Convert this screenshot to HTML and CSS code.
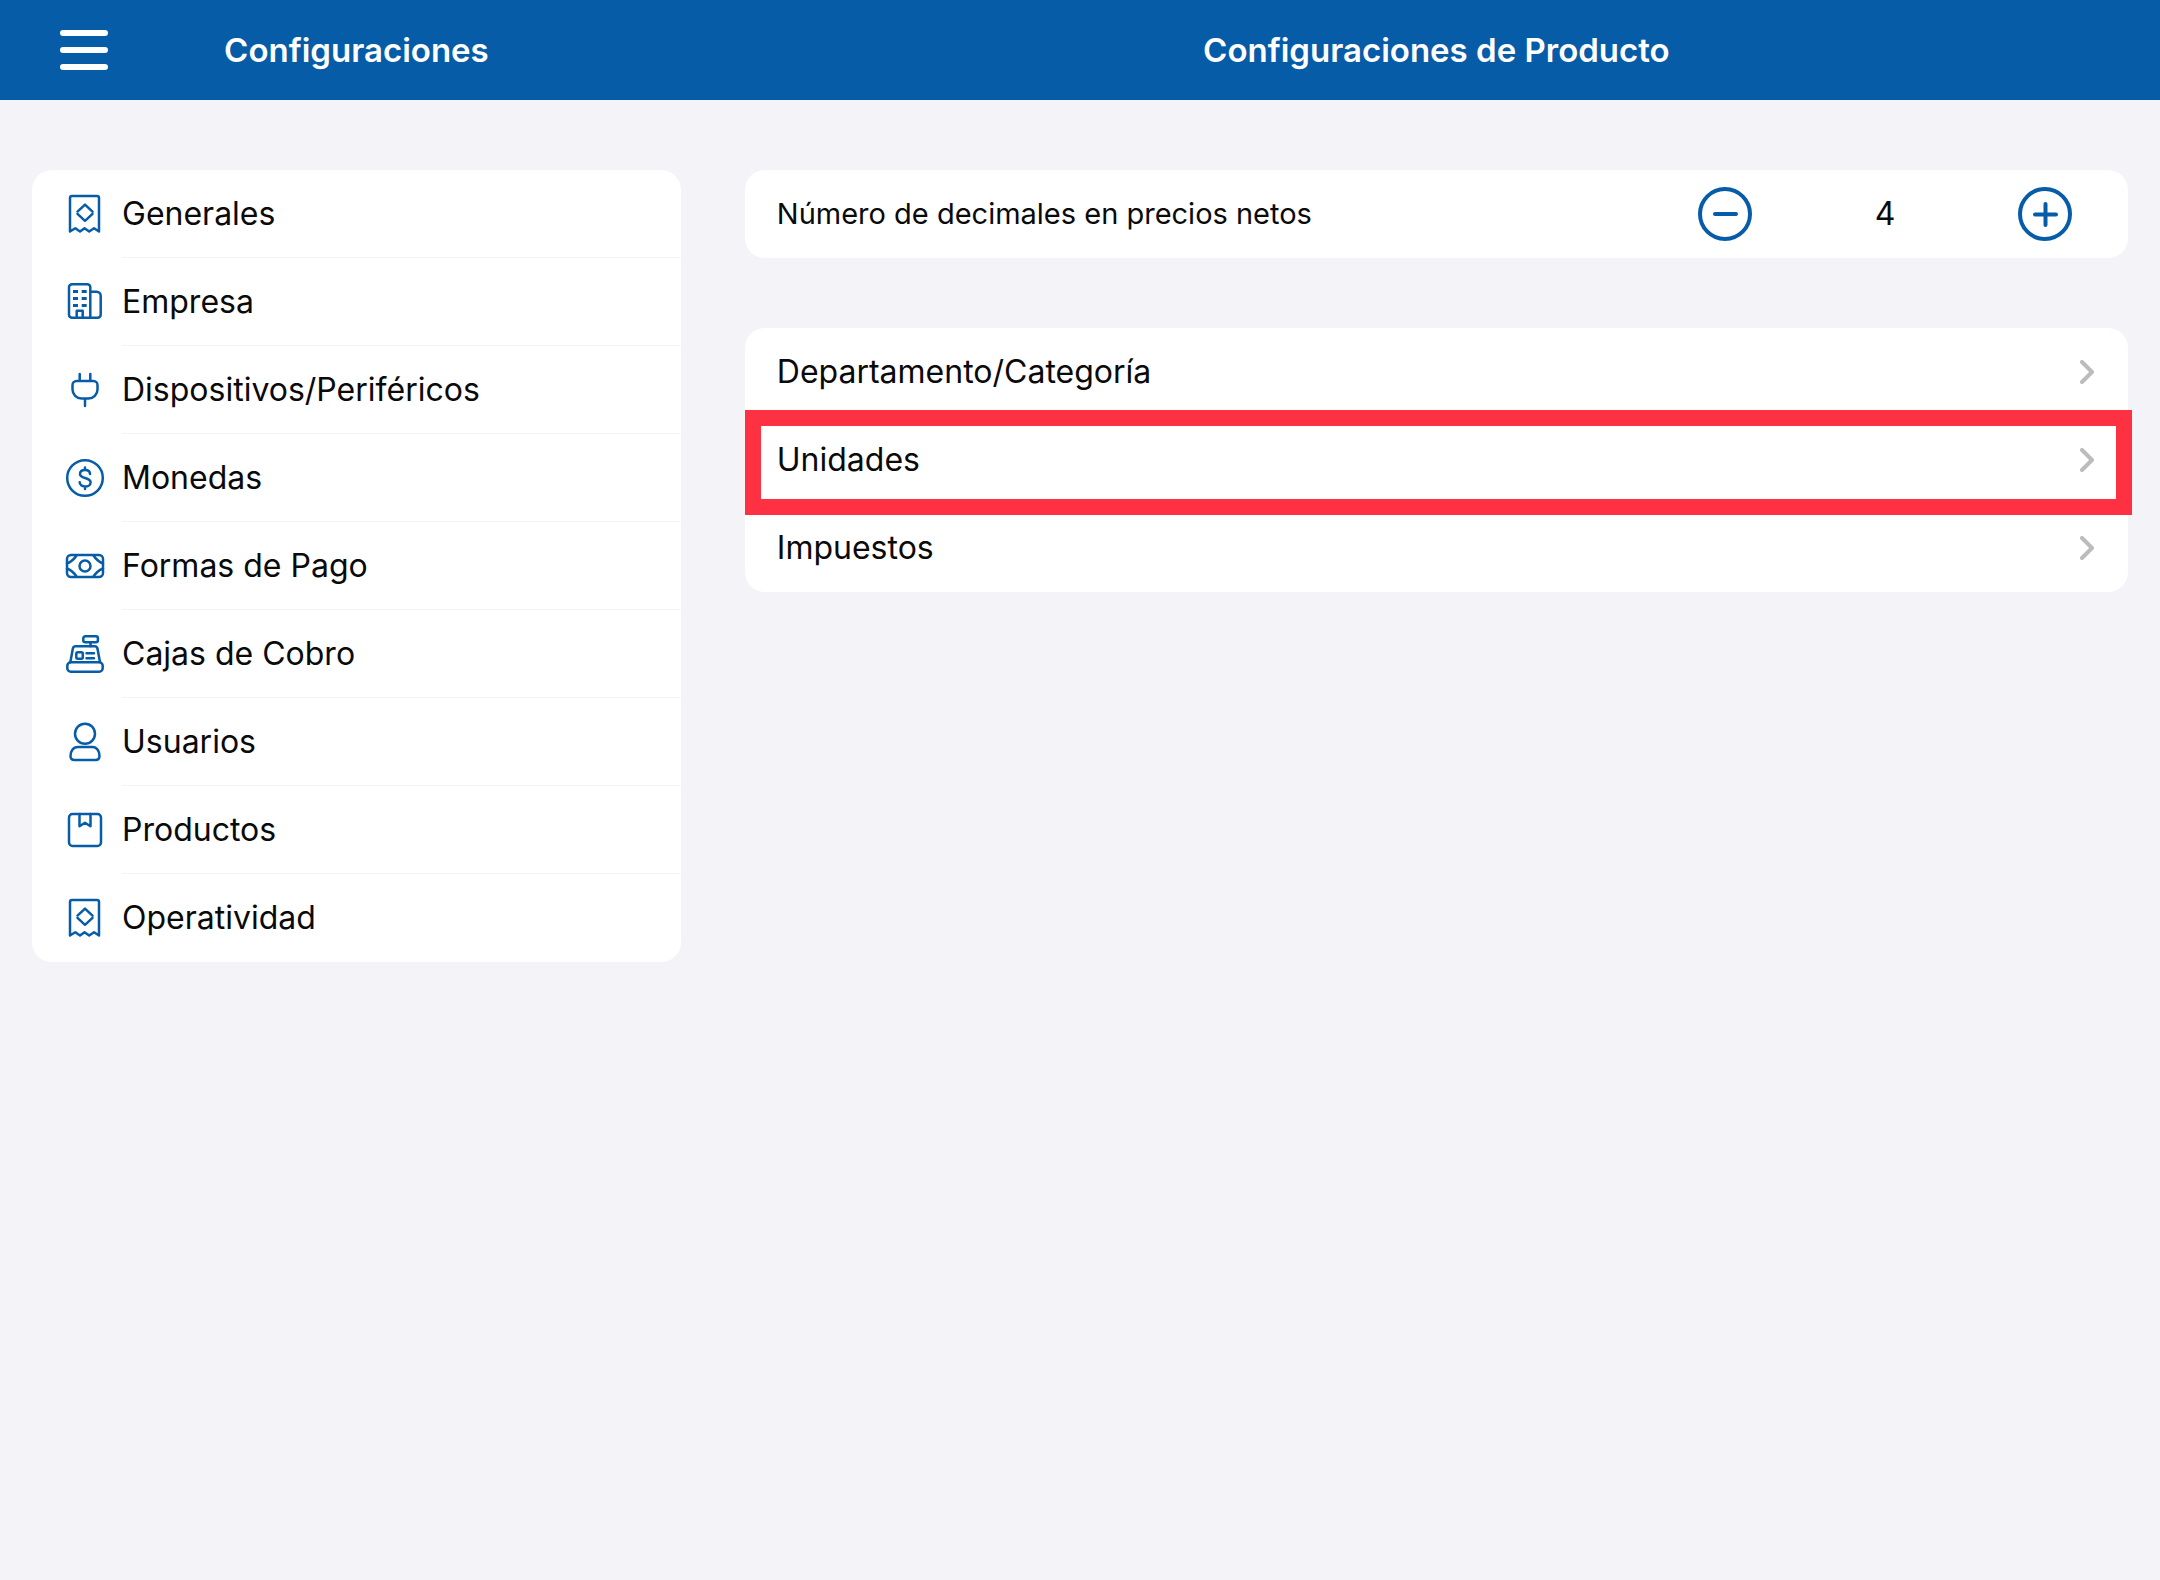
FILE: index.html
```html
<!DOCTYPE html>
<html lang="es">
<head>
<meta charset="utf-8">
<meta name="viewport" content="width=device-width, initial-scale=1">
<title>Configuraciones de Producto</title>
<link rel="stylesheet" href="styles.css">
</head>
<body>
<svg class="sprite" aria-hidden="true">
  <symbol id="receipt" viewBox="0 0 42 42"><path d="M6 38.5V5a2 2 0 0 1 2-2h25a2 2 0 0 1 2 2v33.5l-5-3.2-4.8 3.2-4.7-3.2-4.5 3.2-4.7-3.2z"/><path d="M13.5 18.600 21 11.600l7.500 7M13.500 20.800l7.500 7 7.500-7"/></symbol>
  <symbol id="building" viewBox="0 0 42 42"><path d="M8 3.300h15.300a3 3 0 0 1 3 3v30.400H8a3 3 0 0 1-3-3V6.300a3 3 0 0 1 3-3zM26.300 10.700h6.400a4 4 0 0 1 4 4v19a3 3 0 0 1-3 3h-7.400M12.700 36.700v-7h6v7"/><path class="solid" d="M9 9h5v3H9zM17.700 9h5v3h-5zM9 16h5v3H9zM17.700 16h5v3h-5zM9 23h5v3H9zM17.700 23h5v3h-5z"/></symbol>
  <symbol id="plug" viewBox="0 0 42 42"><path d="M15.700 5v7M26.300 5v7M12.500 12h17a4 4 0 0 1 4 4v4.500a9 9 0 0 1-9 9h-7a9 9 0 0 1-9-9V16a4 4 0 0 1 4-4zM21 29.500V37"/></symbol>
  <symbol id="coin" viewBox="0 0 42 42"><circle cx="21" cy="21" r="17.800"/><path d="M26 17c0-2.400-2-4-5-4s-5 1.500-5 4 2 3.200 5 4 5.600 1.700 5.600 4.400-2.600 4.100-5.600 4.100-5.300-1.800-5.300-4.300M21 10.500V13M21 29.500V32"/></symbol>
  <symbol id="cash" viewBox="0 0 42 42"><rect x="3" y="10" width="36" height="22" rx="4"/><circle cx="21" cy="21" r="5.500"/><path d="M12.500 10.500Q9 16 3 18.500M29.500 10.500Q33 16 39 18.500M12.500 31.500Q9 26 3 23.500M29.500 31.500Q33 26 39 23.500"/></symbol>
  <symbol id="register" viewBox="0 0 42 42"><rect x="19.300" y="3.300" width="14.600" height="6" rx="2"/><path d="M26.500 9.500v4M6.300 29.300l2.500-13.500a3 3 0 0 1 3-2.500h18.700a3 3 0 0 1 3 2.500l2.500 13.500M22.500 20.300h7.500M22.500 25.300h7.500"/><rect x="12.300" y="19.300" width="6.500" height="6.500" rx="1.500"/><rect x="3.300" y="29.300" width="35.400" height="9.400" rx="3.500"/></symbol>
  <symbol id="user" viewBox="0 0 42 42"><circle cx="21" cy="12.700" r="10"/><path d="M14 26h14.500c4.500 0 7 4.500 7 9 0 2.500-1.500 4-4 4h-21c-2.500 0-4-1.500-4-4 0-4.500 2.500-9 7.500-9z"/></symbol>
  <symbol id="product" viewBox="0 0 42 42"><rect x="5" y="5" width="32" height="32" rx="3.500"/><path d="M15.500 5v12.200l5.500-3.500 5.500 3.500V5"/></symbol>
  <symbol id="chevron" viewBox="0 0 16 24"><path d="M2 2 12 12 2 22"/></symbol>
</svg>

<header class="topbar">
  <div class="topbar-side">
    <button class="menu-button" type="button" aria-label="Menú">
      <svg viewBox="0 0 50 42"><path d="M4 4h42M4 21h42M4 38h42"/></svg>
    </button>
    <h2 class="title">Configuraciones</h2>
  </div>
  <h1 class="title">Configuraciones de Producto</h1>
</header>

<div class="panes">
  <nav class="pane">
    <ul class="card">
      <li><a class="nav-row" href="#generales"><svg class="icon"><use href="#receipt"/></svg><span class="nav-label">Generales</span></a></li>
      <li><a class="nav-row" href="#empresa"><svg class="icon"><use href="#building"/></svg><span class="nav-label">Empresa</span></a></li>
      <li><a class="nav-row" href="#dispositivos"><svg class="icon"><use href="#plug"/></svg><span class="nav-label">Dispositivos/Periféricos</span></a></li>
      <li><a class="nav-row" href="#monedas"><svg class="icon"><use href="#coin"/></svg><span class="nav-label">Monedas</span></a></li>
      <li><a class="nav-row" href="#pago"><svg class="icon"><use href="#cash"/></svg><span class="nav-label">Formas de Pago</span></a></li>
      <li><a class="nav-row" href="#cajas"><svg class="icon"><use href="#register"/></svg><span class="nav-label">Cajas de Cobro</span></a></li>
      <li><a class="nav-row" href="#usuarios"><svg class="icon"><use href="#user"/></svg><span class="nav-label">Usuarios</span></a></li>
      <li><a class="nav-row" href="#productos"><svg class="icon"><use href="#product"/></svg><span class="nav-label">Productos</span></a></li>
      <li><a class="nav-row" href="#operatividad"><svg class="icon"><use href="#receipt"/></svg><span class="nav-label">Operatividad</span></a></li>
    </ul>
  </nav>

  <main class="pane">
    <section class="card setting">
      <span class="setting-label" id="decimals-label">Número de decimales en precios netos</span>
      <div class="stepper" role="group" aria-labelledby="decimals-label">
        <button class="step-button" type="button" aria-label="Disminuir"><svg viewBox="0 0 54 54"><circle cx="27" cy="27" r="25"/><path d="M17 27h21"/></svg></button>
        <output class="step-value">4</output>
        <button class="step-button" type="button" aria-label="Aumentar"><svg viewBox="0 0 54 54"><circle cx="27" cy="27" r="25"/><path d="M17 27.500h21M27.500 17v21"/></svg></button>
      </div>
    </section>

    <ul class="card">
      <li><a class="link-row" href="#departamento">Departamento/Categoría<svg class="chevron"><use href="#chevron"/></svg></a></li>
      <li class="highlighted"><a class="link-row" href="#unidades">Unidades<svg class="chevron"><use href="#chevron"/></svg></a></li>
      <li><a class="link-row" href="#impuestos">Impuestos<svg class="chevron"><use href="#chevron"/></svg></a></li>
    </ul>
  </main>
</div>
</body>
</html>
```
FILE: styles.css
```css
:root {
  --blue: #075ca8;
  --surface: #f3f3f8;
  --line: #f4f4f6;
  --row: 88px;
}

* {
  box-sizing: border-box;
}

body {
  margin: 0;
  min-height: 100vh;
  background: var(--surface);
  color: #0a0a0a;
  font-family: Inter, "Liberation Sans", sans-serif;
  font-size: 32px;
  line-height: 40px;
}

ul {
  margin: 0;
  padding: 0;
  list-style: none;
}

a {
  color: inherit;
  text-decoration: none;
}

button {
  padding: 0;
  border: 0;
  background: none;
  cursor: pointer;
}

svg {
  display: block;
  fill: none;
  stroke-linecap: round;
  stroke-linejoin: round;
}

.sprite {
  position: absolute;
  width: 0;
  height: 0;
}

.topbar,
.panes {
  display: grid;
  grid-template-columns: 33% 1fr;
}

.topbar {
  align-items: center;
  min-height: 100px;
  background: var(--blue);
  color: #fff;
}

.topbar-side {
  display: grid;
  grid-template-columns: 1fr auto 1fr;
  align-items: center;
  padding: 0 56px;
}

.title {
  margin: 0;
  font-size: 33px;
  font-weight: 600;
  text-align: center;
}

.menu-button {
  justify-self: start;
}

.menu-button svg {
  width: 56px;
  height: 42px;
  stroke: #fff;
  stroke-width: 6px;
}

.pane {
  display: flex;
  flex-direction: column;
  gap: 70px;
  padding: 70px 32px;
}

.card {
  border-radius: 20px;
  background: #fff;
}

.nav-row {
  display: flex;
  align-items: center;
  gap: 16px;
  padding-left: 32px;
}

.icon {
  flex: none;
  width: 42px;
  height: 42px;
  stroke: var(--blue);
  stroke-width: 2.5;
}

.solid {
  fill: var(--blue);
  stroke: none;
}

.nav-label {
  display: flex;
  flex: 1;
  align-items: center;
  min-height: var(--row);
  border-bottom: 1px solid var(--line);
}

li:last-child .nav-label {
  border-bottom: 0;
}

.setting {
  display: flex;
  align-items: center;
  justify-content: space-between;
  min-height: var(--row);
  padding: 0 56px 0 32px;
}

.setting-label {
  font-size: 29px;
}

.stepper {
  display: flex;
  align-items: center;
}

.step-button svg {
  width: 54px;
  height: 54px;
  stroke: var(--blue);
  stroke-width: 4px;
}

.step-value {
  width: 266px;
  text-align: center;
}

.link-row {
  display: flex;
  align-items: center;
  justify-content: space-between;
  min-height: var(--row);
  padding: 0 32px;
}

.chevron {
  width: 16px;
  height: 24px;
  stroke: #bcbcbe;
  stroke-width: 4px;
}

/* Frame drawn over the row, reaching past its edges */
.highlighted {
  position: relative;
}

.highlighted::after {
  content: "";
  position: absolute;
  inset: -6px -4px -11px 0;
  border: 16px solid #fd3142;
  pointer-events: none;
}
```
